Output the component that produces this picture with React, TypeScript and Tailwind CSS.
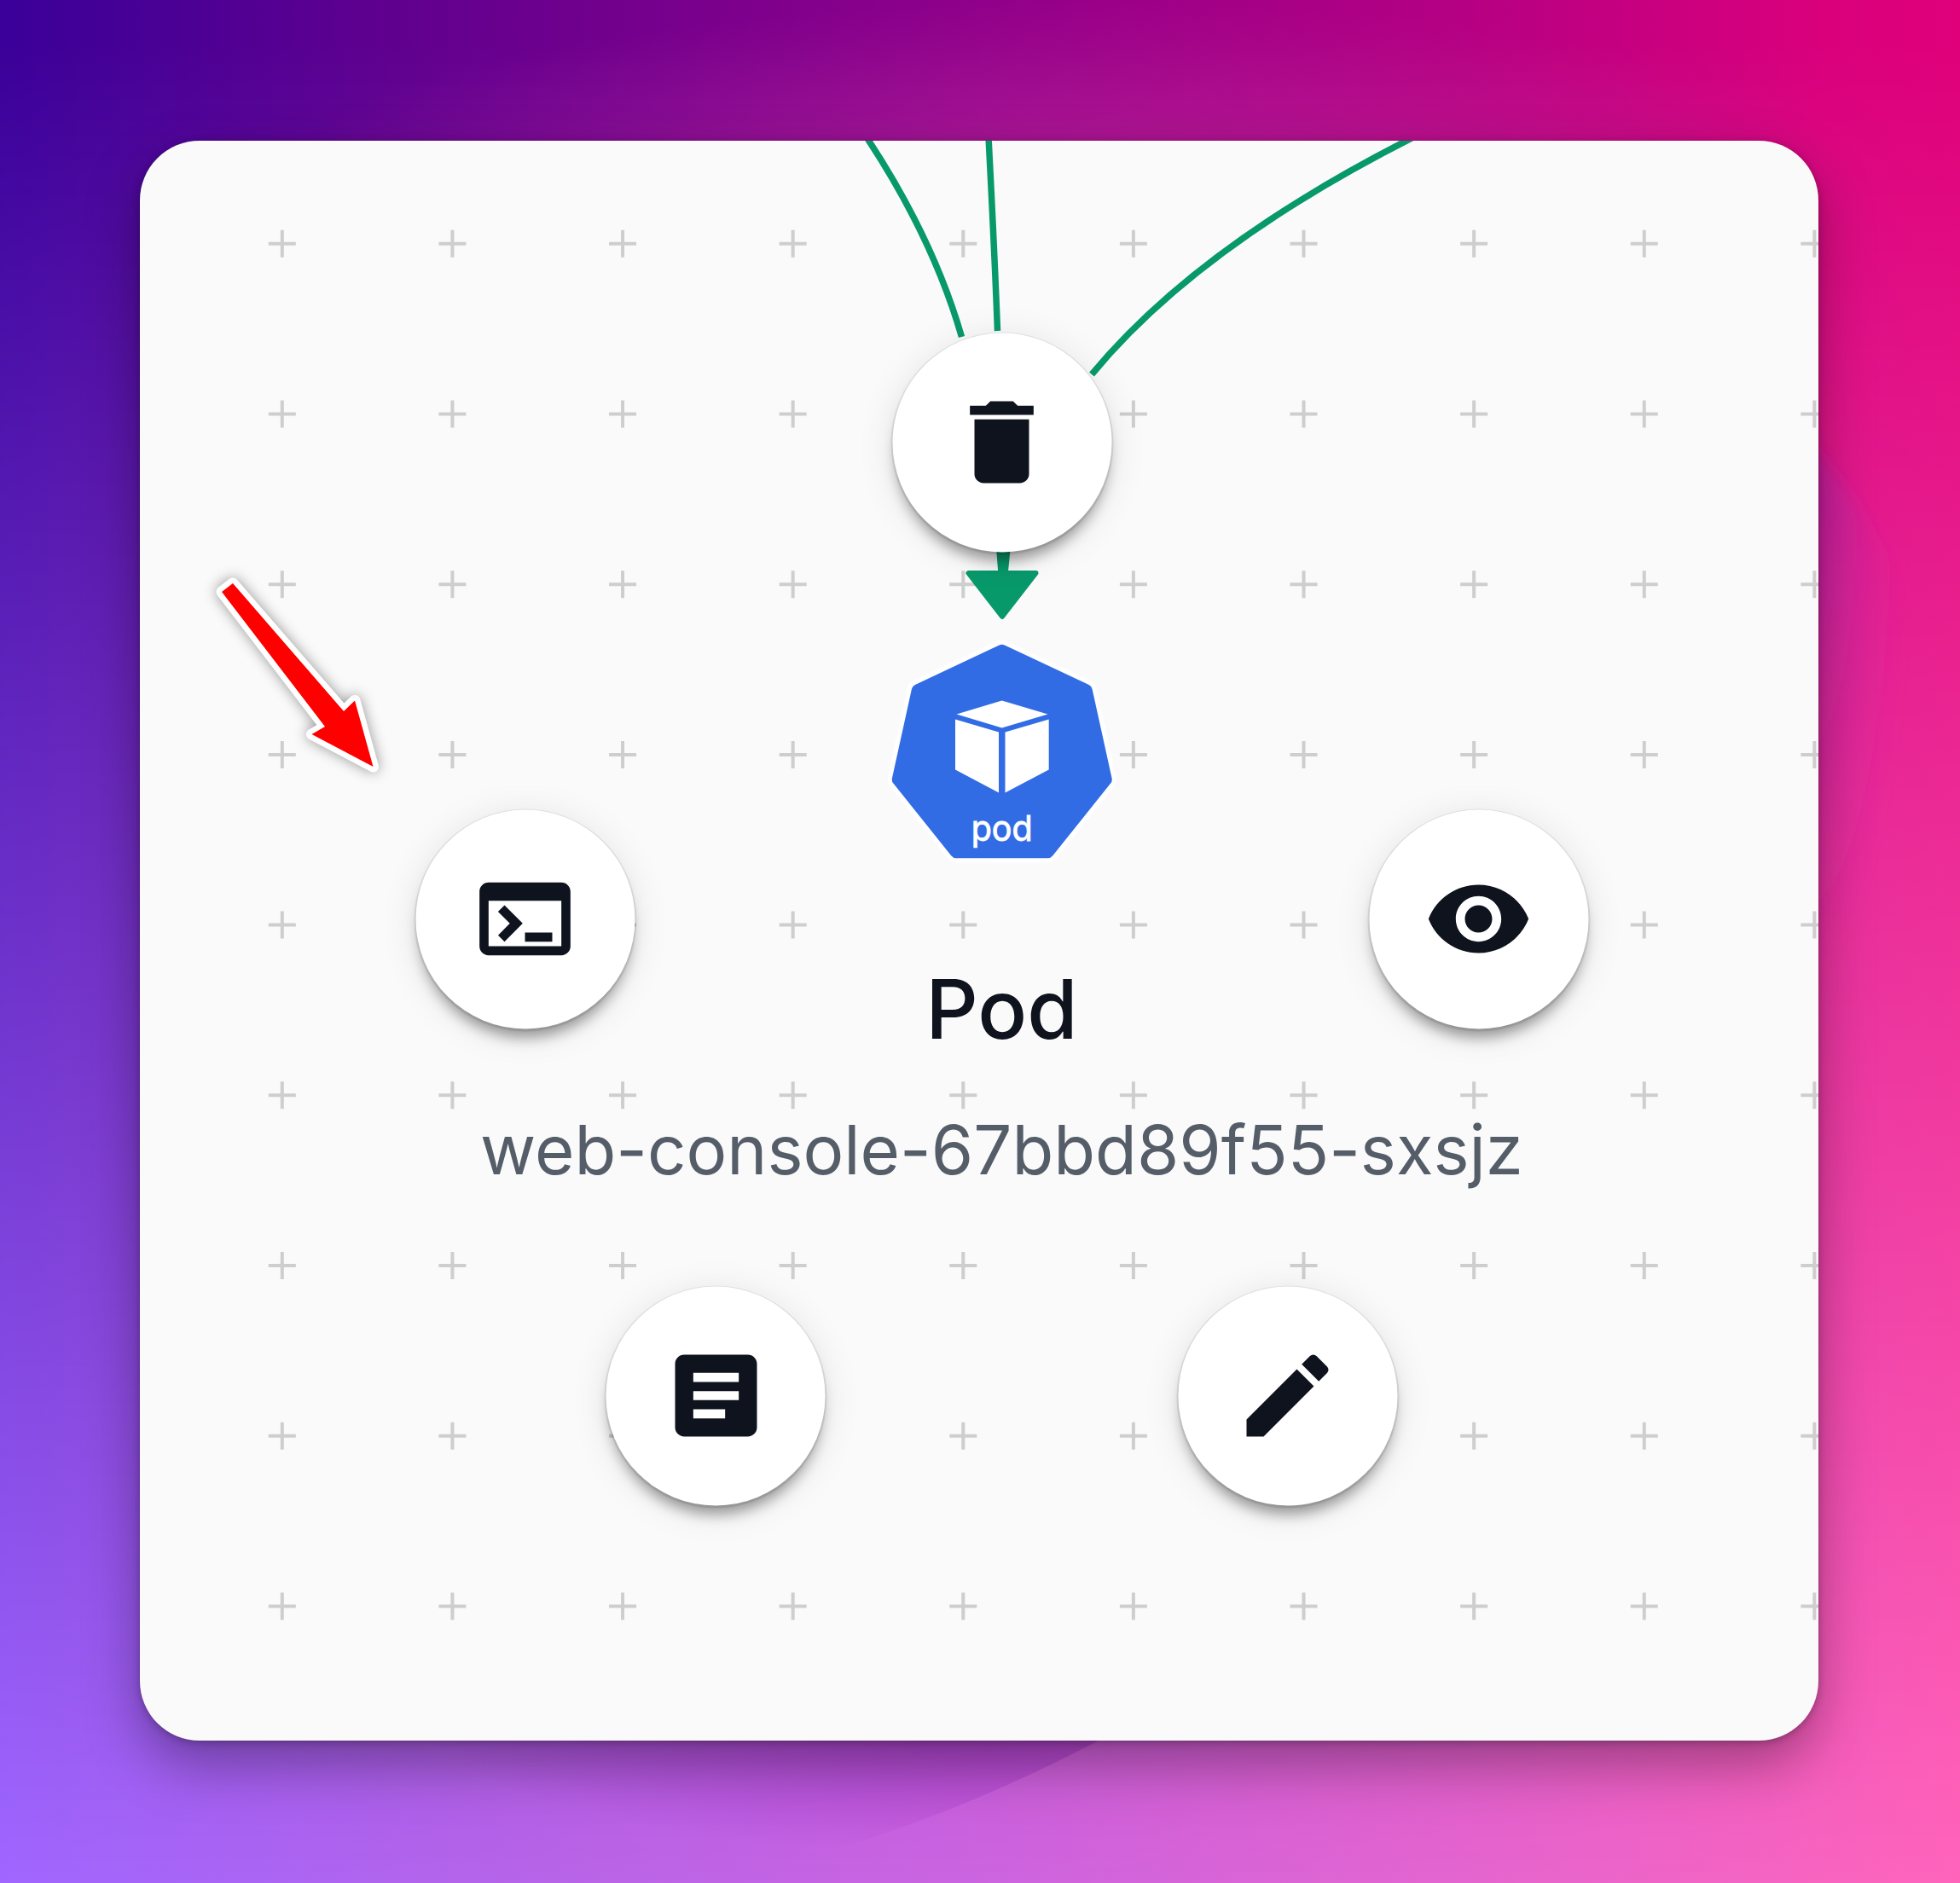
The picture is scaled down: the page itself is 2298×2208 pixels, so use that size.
import React from "react";
import type { ReactNode } from "react";
import { MdDelete, MdVisibility, MdArticle, MdEdit } from "react-icons/md";

function TerminalIcon() {
  return (
    <svg className="-mt-0.5 size-32" viewBox="0 0 24 24" fill="currentColor">
      <path d="M20 4H4c-1.110 0-2 .9-2 2v12c0 1.100.89 2 2 2h16c1.100 0 2-.9 2-2V6c0-1.100-.89-2-2-2zm0 14H4V8h16v10zm-2-1h-6v-2h6v2zM7.500 17l-1.410-1.410L8.670 13l-2.590-2.590L7.500 9l4 4-4 4z" />
    </svg>
  );
}

const MENU: { id: string; x: number; y: number; icon: ReactNode }[] = [
  { id: "delete", x: 1010.5, y: 354, icon: <MdDelete className="-mt-0.5 size-32" /> },
  { id: "terminal", x: 451.5, y: 913, icon: <TerminalIcon /> },
  { id: "view", x: 1569.5, y: 913, icon: <MdVisibility className="-mt-0.5 size-32" /> },
  { id: "logs", x: 675, y: 1472, icon: <MdArticle className="-mt-0.5 size-32" /> },
  { id: "edit", x: 1345.5, y: 1472, icon: <MdEdit className="-mt-0.5 size-32" /> },
];

function Grid() {
  const marks: string[] = [];
  for (let r = 0; r < 9; r++) {
    for (let c = 0; c < 10; c++) {
      const x = 166.8 + c * 199.62;
      const y = 120.8 + r * 199.7;
      marks.push(`M${x - 16} ${y}h32M${x} ${y - 16}v32`);
    }
  }
  return <path d={marks.join("")} stroke="#cecece" strokeWidth="4" fill="none" />;
}

function Wallpaper() {
  return (
    <svg className="absolute inset-0" width="2298" height="2208" viewBox="0 0 2298 2208">
      <defs>
        <linearGradient id="top" x1="0" x2="1" y1="0" y2="0">
          <stop offset="0" stopColor="#3a0099" />
          <stop offset="0.2" stopColor="#60008f" />
          <stop offset="0.5" stopColor="#90008a" />
          <stop offset="0.75" stopColor="#b60083" />
          <stop offset="0.93" stopColor="#da007c" />
          <stop offset="1" stopColor="#df007a" />
        </linearGradient>
        <linearGradient id="bottom" x1="0" x2="1" y1="0" y2="0">
          <stop offset="0" stopColor="#a066ff" />
          <stop offset="0.25" stopColor="#b564ea" />
          <stop offset="0.5" stopColor="#cc64e0" />
          <stop offset="0.75" stopColor="#e465cf" />
          <stop offset="1" stopColor="#ff64bb" />
        </linearGradient>
        <linearGradient id="fade" x1="0" x2="0" y1="0" y2="1">
          <stop offset="0.02" stopColor="#fff" stopOpacity="0" />
          <stop offset="1" stopColor="#fff" />
        </linearGradient>
        <mask id="m">
          <rect width="2298" height="2208" fill="url(#fade)" />
        </mask>
        <radialGradient id="glow">
          <stop offset="0" stopColor="#c8309c" stopOpacity="0.48" />
          <stop offset="1" stopColor="#c8309c" stopOpacity="0" />
        </radialGradient>
        <radialGradient id="lobe" gradientUnits="userSpaceOnUse" cx="0" cy="0" r="1" gradientTransform="translate(1200 2000) scale(720 180)">
          <stop offset="0" stopColor="#7a10b0" stopOpacity="0.42" />
          <stop offset="1" stopColor="#7a10b0" stopOpacity="0" />
        </radialGradient>
        <radialGradient id="side" gradientUnits="userSpaceOnUse" cx="0" cy="0" r="1" gradientTransform="translate(2110 590) scale(125 560)">
          <stop offset="0" stopColor="#9a28b4" stopOpacity="0.5" />
          <stop offset="1" stopColor="#c030a8" stopOpacity="0" />
        </radialGradient>
        <filter id="soft" x="-20%" y="-20%" width="140%" height="140%">
          <feGaussianBlur stdDeviation="10" />
        </filter>
      </defs>
      <rect width="2298" height="2208" fill="url(#top)" />
      <rect width="2298" height="2208" fill="url(#bottom)" mask="url(#m)" />
      <ellipse cx="1270" cy="230" rx="960" ry="230" fill="url(#glow)" />
      <path d="M400 1900H1480Q1390 1985 1288 2041Q1120 2130 940 2180H400Z" fill="url(#lobe)" />
      <path d="M2080 480Q2170 560 2225 670Q2298 860 2298 1200H2080Z" fill="url(#side)" filter="url(#soft)" />
    </svg>
  );
}

const HEPTAGON = "M154.700 33L253.500 79.500L276.500 184L208.500 269H101L33 184L56 79.500Z";
const ARROW = "M20 34L33 24L163 174L176 161.500L197.500 239L125.500 201L141 192Z";

export default function App() {
  return (
    <div className="relative flex h-[2208px] w-[2298px] overflow-hidden bg-[#c020a0] pl-[164px] pt-[165px] font-['Inter',sans-serif]">
      <Wallpaper />

      <div className="relative h-[1876px] w-[1968px] rounded-[70px] bg-[#fafafa] shadow-[0_28px_64px_rgba(0,0,0,0.34),0_2px_10px_rgba(0,0,0,0.26)]">
        <div className="absolute inset-0 overflow-hidden rounded-[70px]">
          <svg width="1968" height="1876" viewBox="0 0 1968 1876">
            <Grid />
            <g stroke="#08996b" strokeWidth="7.500" fill="none">
              <path d="M852 -4Q930 114 963.500 230" />
              <path d="M995 -4Q1002 130 1005.500 223" />
              <path d="M1493 -4Q1240 124 1116 274" />
            </g>
            <path d="M1003.500 470h18l-4 40h-11z" fill="#08996b" />
            <path d="M971.500 507h79L1011 558z" fill="#08996b" stroke="#08996b" strokeWidth="6" strokeLinejoin="round" />

            <g transform="translate(856 565)">
              <path d={HEPTAGON} fill="#fff" stroke="#fff" strokeWidth="25" strokeLinejoin="round" />
              <path d={HEPTAGON} fill="#326ce5" stroke="#326ce5" strokeWidth="14.500" strokeLinejoin="round" />
              <g fill="#fff">
                <path d="M154.700 91.500L208.500 107.500L154.700 123.500L101.500 107.500Z" />
                <path d="M100 113.500L151 128.500V199.500L100 172.500Z" />
                <path d="M209.700 113.500L158.500 128.500V199.500L209.700 172.500Z" />
              </g>
              <text x="154.700" y="255.500" textAnchor="middle" fontSize="41" textLength="72" lengthAdjust="spacingAndGlyphs" fontFamily="Inter, sans-serif" fill="#fff" stroke="#fff" strokeWidth="0.900">
                pod
              </text>
            </g>
          </svg>
        </div>

        {MENU.map(({ id, x, y, icon }) => (
          <button
            key={id}
            className="absolute flex size-[257px] -translate-x-1/2 -translate-y-1/2 items-center justify-center rounded-full bg-white text-[#0e131d] shadow-[0_1px_0_2px_rgba(0,0,0,0.08),0_15px_16px_-5px_rgba(0,0,0,0.36),0_6px_44px_rgba(0,0,0,0.10)]"
            style={{ left: x, top: y }}
          >
            {icon}
          </button>
        ))}

        <div className="absolute left-[1010.5px] top-[952px] flex w-[1300px] -translate-x-1/2 flex-col items-center">
          <div className="text-[96px] leading-[132px] font-medium text-[#0e131d]">Pod</div>
          <div className="mt-[33px] whitespace-nowrap text-[79.75px] leading-[132px] text-[#555d68]">web-console-67bbd89f55-sxsjz</div>
        </div>

        <svg className="absolute left-[76px] top-[495px] drop-shadow-[0_0_8px_rgba(0,0,0,0.4)]" width="240" height="270" viewBox="0 0 240 270">
          <path d={ARROW} fill="#fff" stroke="#fff" strokeWidth="13" strokeLinejoin="round" />
          <path d={ARROW} fill="#f00" />
        </svg>
      </div>
    </div>
  );
}
